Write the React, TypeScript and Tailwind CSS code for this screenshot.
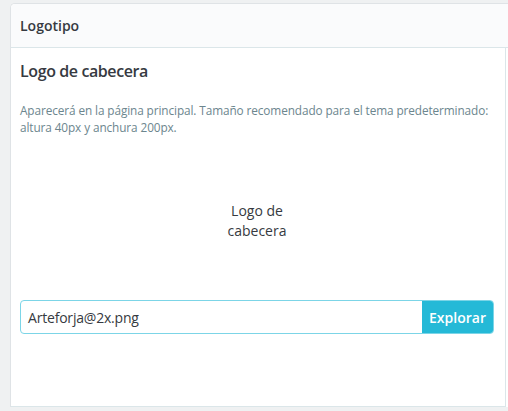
export default function App() {
  return (
    <div className="h-[411px] w-[508px] overflow-hidden bg-[#eff1f2] pl-[10px] pt-[3px] font-['Open_Sans',sans-serif] text-[#363a41]">
      <div className="w-[520px] overflow-hidden rounded-tl-[5px] border-t border-l border-[#dfe3e6] bg-white">
        <div className="flex h-[44px] items-center border-b border-[#dbe6e9] bg-[#fafbfc] px-[9px] text-[14px] font-semibold">
          Logotipo
        </div>
        <div className="h-[359px] w-[495px] border-r border-b border-[#dbe6e9] pl-[9px] pr-[11px]">
          <h2 className="pt-[11px] text-[16px] font-semibold leading-[24px] tracking-[-0.4px]">Logo de cabecera</h2>
          <p className="mt-[19px] text-[11.8px] leading-[17px] tracking-[-0.1px] text-[#6c868e]">
            Aparecerá en la página principal. Tamaño recomendado para el tema predeterminado: altura 40px y anchura 200px.
          </p>
          <div className="flex h-[164px] items-center justify-center">
            <div className="mt-[6px] w-[80px] text-center text-[14px] leading-[20px]">Logo de cabecera</div>
          </div>
          <div className="flex h-[34px] overflow-hidden rounded-[4px] border border-[#7cd5e7]">
            <div className="flex flex-1 items-center pl-[7px] text-[14px] tracking-[-0.2px]">Arteforja@2x.png</div>
            <button className="w-[71px] bg-[#25b9d7] text-[14px] font-semibold text-white">Explorar</button>
          </div>
        </div>
      </div>
    </div>
  );
}
